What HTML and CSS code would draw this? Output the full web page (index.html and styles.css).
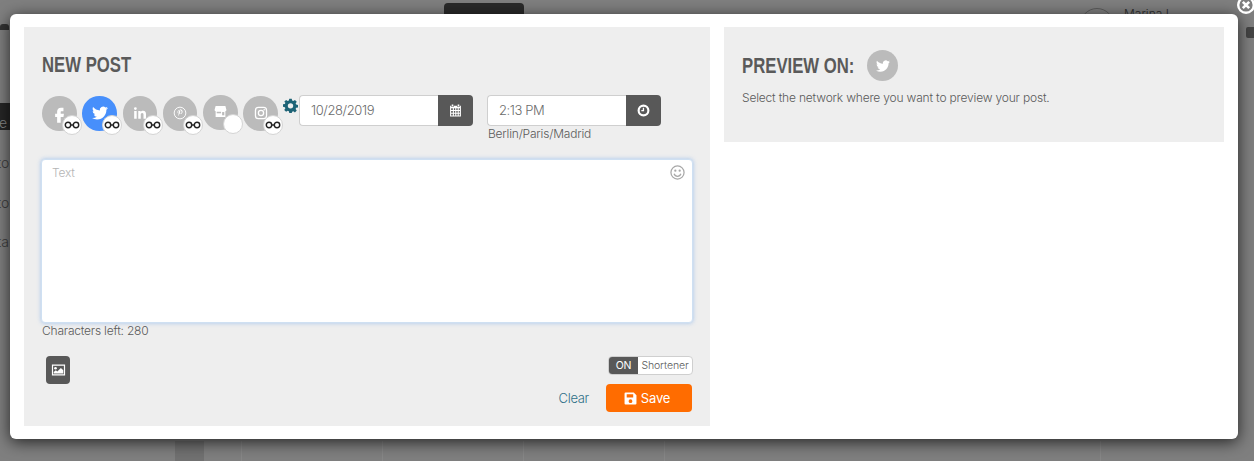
FILE: index.html
```html
<!DOCTYPE html>
<html lang="en">
<head>
<meta charset="utf-8">
<title>New post</title>
<link rel="stylesheet" href="styles.css">
</head>
<body>
<svg class="defs" width="0" height="0" aria-hidden="true">
  <symbol id="tw" viewBox="0 0 24 24"><path d="M23.953 4.57a10 10 0 01-2.825.775 4.958 4.958 0 002.163-2.723c-.951.555-2.005.959-3.127 1.184a4.92 4.92 0 00-8.384 4.482C7.69 8.095 4.067 6.13 1.64 3.162a4.822 4.822 0 00-.666 2.475c0 1.71.87 3.213 2.188 4.096a4.904 4.904 0 01-2.228-.616v.06a4.923 4.923 0 003.946 4.827 4.996 4.996 0 01-2.212.085 4.936 4.936 0 004.604 3.417 9.867 9.867 0 01-6.102 2.105c-.39 0-.779-.023-1.17-.067a13.995 13.995 0 007.557 2.209c9.053 0 13.998-7.496 13.998-13.985 0-.21 0-.42-.015-.63A9.935 9.935 0 0024 4.59z"/></symbol>
  <symbol id="link" viewBox="0 0 20 10"><g fill="none" stroke="#222" stroke-width="1.800"><circle cx="5" cy="5" r="3.400"/><circle cx="15" cy="5" r="3.400"/><path d="M8 5h4"/></g></symbol>
</svg>

<div class="backdrop-bits" aria-hidden="true">
  <span class="bit-logo"></span>
  <span class="bit-store"></span>
  <span class="bit-tab"></span>
  <span class="bit-menu">e</span>
  <span class="bit-line bit-l1">to</span>
  <span class="bit-line bit-l2">to</span>
  <span class="bit-line bit-l3">ta</span>
  <span class="bit-avatar"></span>
  <span class="bit-name">Marina L</span>
  <span class="bit-cell"></span>
  <span class="bit-rule r1"></span><span class="bit-rule r2"></span><span class="bit-rule r3"></span><span class="bit-rule r4"></span><span class="bit-rule r5"></span>
</div>

<main class="modal">
  <section class="panel panel-new">
    <h2 class="title">NEW POST</h2>
    <div class="controls">
      <div class="networks">
        <div class="net"><svg class="glyph glyph-f" viewBox="0 0 24 24"><path d="M14 8h3V3.500h-3.200C11 3.500 9 5.500 9 8.300V11H6.500v4H9v7.500h4.500V15H17l.6-4h-4.100V8.800c0-.5.200-.8.500-.8z"/></svg><span class="badge"><svg class="chain"><use href="#link"/></svg></span></div>
        <div class="net net-on"><svg class="glyph glyph-tw"><use href="#tw"/></svg><span class="badge"><svg class="chain"><use href="#link"/></svg></span></div>
        <div class="net"><svg class="glyph" viewBox="0 0 24 24"><path d="M2 8.500h4.300V22H2zM4.100 2a2.400 2.400 0 110 4.800 2.400 2.400 0 010-4.800zM9 8.500h4.100v1.900c.8-1.300 2.300-2.200 4.200-2.200 3.700 0 5 2.300 5 6V22H18v-7c0-1.800-.5-3.100-2.200-3.100-1.900 0-2.500 1.400-2.500 3.100v7H9z"/></svg><span class="badge"><svg class="chain"><use href="#link"/></svg></span></div>
        <div class="net"><svg class="glyph" viewBox="0 0 24 24"><circle cx="12" cy="12" r="10" fill="none" stroke="#fff" stroke-width="1.600"/><path d="M12.300 6.500c-3 0-4.600 1.900-4.600 3.900 0 1.100.5 2.100 1.400 2.500l.4-1.100c-.5-.5-.7-1-.7-1.600 0-1.500 1.200-2.800 3.200-2.800 1.700 0 2.800 1.100 2.800 2.600 0 1.900-.9 3.400-2.100 3.400-.7 0-1.200-.6-1-1.300l.7-2.600c.2-.8-.2-1.400-.9-1.400-.9 0-1.500.9-1.500 2 0 .6.200 1.100.2 1.100l-1.300 5.200h1.200l.9-3.400c.4.600 1.100.9 1.800.9 2.200 0 3.700-2 3.700-4.500 0-2.200-1.800-3.900-4.200-3.900z"/></svg><span class="badge"><svg class="chain"><use href="#link"/></svg></span></div>
        <div class="net net-up"><svg class="glyph glyph-store" viewBox="0 0 24 24"><path d="M3 2h18l2 7a2.600 2.600 0 01-2 2.400V22H3V11.400A2.600 2.600 0 011 9z"/><rect x="5" y="12.500" width="8" height="2.800" fill="#bbb"/><rect x="15" y="13" width="4" height="6" fill="#bbb"/></svg><span class="badge"></span></div>
        <div class="net"><svg class="glyph" viewBox="0 0 24 24"><rect x="2.500" y="2.500" width="19" height="19" rx="5" fill="none" stroke="#fff" stroke-width="2.200"/><circle cx="12" cy="12" r="4.500" fill="none" stroke="#fff" stroke-width="2.200"/><circle cx="17.500" cy="6.500" r="1.300"/></svg><span class="badge"><svg class="chain"><use href="#link"/></svg></span></div>
      </div>
      <svg class="gear" viewBox="0 0 24 24"><path fill-rule="evenodd" d="M10 1h4l.6 3.100 1.900.8L19.100 3 22 6l-1.800 2.600.8 1.900 3 .5v4l-3 .6-.8 1.900 1.800 2.600-2.900 2.900-2.600-1.800-1.900.8L14 24h-4l-.6-3-1.900-.8L4.900 22 2 19.100l1.800-2.600-.8-1.900-3-.6v-4l3-.5.8-1.900L2 6l2.900-3 2.600 1.900 1.900-.8zM12 8.200a4.300 4.300 0 100 8.600 4.300 4.300 0 000-8.600z"/></svg>
      <div class="field field-date">
        <div class="group">
          <span class="input">10/28/2019</span>
          <span class="addon">
            <svg class="addon-icon" viewBox="0 0 24 24"><path fill-rule="evenodd" d="M5 1h3v3H5zM16 1h3v3h-3zM2 3h2v2h5V3h6v2h5V3h2v20H2zM4 8v3h3V8zm5 0v3h2.500V8zm4.500 0v3H16V8zM18 8v3h2V8zM4 13v3h3v-3zm5 0v3h2.500v-3zm4.500 0v3H16v-3zm4.500 0v3h2v-3zM4 18v3h3v-3zm5 0v3h2.500v-3zm4.500 0v3H16v-3zm4.500 0v3h2v-3z"/></svg>
          </span>
        </div>
      </div>
      <div class="field field-time">
        <div class="group">
          <span class="input">2:13 PM</span>
          <span class="addon">
            <svg class="addon-icon" viewBox="0 0 24 24"><path fill-rule="evenodd" d="M12 1a11 11 0 110 22 11 11 0 010-22zm0 4a7 7 0 100 14 7 7 0 000-14zm-1.300 2h2.400v6.300H8v-2.400h2.700z"/></svg>
          </span>
        </div>
        <p class="zone">Berlin/Paris/Madrid</p>
      </div>
    </div>

    <div class="textbox">
      <span class="placeholder">Text</span>
      <svg class="smile" viewBox="0 0 24 24"><g fill="none" stroke="#a8a8a8" stroke-width="2"><circle cx="12" cy="12" r="10.500"/><path d="M6.500 14c1 2.800 3 4 5.500 4s4.500-1.200 5.500-4"/></g><circle cx="8.500" cy="9" r="1.800" fill="#a8a8a8"/><circle cx="15.500" cy="9" r="1.800" fill="#a8a8a8"/></svg>
    </div>
    <p class="counter">Characters left: 280</p>

    <div class="foot">
      <span class="media-btn"><svg class="media-icon" viewBox="0 0 24 20"><path fill-rule="evenodd" d="M1 1h22v18H1zm2 2v14h18V3z" fill="#fff"/><circle cx="7" cy="7" r="2.200" fill="#fff"/><path d="M4 16v-2.500l3.500-3 2.500 2 6-6 4 4V16z" fill="#fff"/></svg></span>
      <div class="actions">
        <div class="toggle"><span class="toggle-on">ON</span><span class="toggle-label">Shortener</span></div>
        <div class="buttons">
          <span class="clear">Clear</span>
          <span class="save"><svg class="save-icon" viewBox="0 0 24 24"><path fill-rule="evenodd" d="M3 1h15l5 5v15a2 2 0 01-2 2H3a2 2 0 01-2-2V3a2 2 0 012-2zm2 3v6h12V4zm7 9.500a3.500 3.500 0 100 7 3.500 3.500 0 000-7z"/></svg>Save</span>
        </div>
      </div>
    </div>
  </section>

  <section class="panel panel-preview">
    <div class="preview-head">
      <h2 class="title title-preview">PREVIEW ON:</h2>
      <span class="preview-net"><svg class="glyph"><use href="#tw"/></svg></span>
    </div>
    <p class="preview-text">Select the network where you want to preview your post.</p>
  </section>
</main>

<svg class="close" viewBox="0 0 20 20" aria-hidden="true"><circle cx="10" cy="10" r="7.800" fill="none" stroke="#fff" stroke-width="2.400"/><path d="M6.800 6.800l6.400 6.400M13.200 6.800l-6.400 6.400" stroke="#fff" stroke-width="2.600"/></svg>
</body>
</html>
```
FILE: styles.css
```css
* { box-sizing: border-box; }

html, body { height: 100%; }

body {
  margin: 0;
  height: 461px;
  overflow: hidden;
  position: relative;
  background: #7f7f7f;
  font-family: "Inter", "Liberation Sans", sans-serif;
  font-weight: 300;
  color: #5a5a5a;
}

.defs { position: absolute; }

/* dimmed page behind the dialog */
.backdrop-bits span { position: absolute; display: block; }
.bit-logo { left: 0; top: 24px; width: 9px; height: 6px; background: #333; border-radius: 3px 3px 0 0; }
.bit-store { left: 1246px; top: 27px; width: 8px; height: 11px; background: #444; border-radius: 2px 0 0 2px; }
.bit-tab { left: 444px; top: 3px; width: 80px; height: 12px; background: #2a2a2a; border-radius: 4px 4px 0 0; }
.bit-menu { left: 0; top: 103px; width: 10px; height: 27px; background: #262626; color: #8a8a8a; font-size: 14px; line-height: 39px; text-indent: -1px; overflow: hidden; }
.bit-line { left: 0; width: 10px; color: #3d3d3d; font-size: 14px; line-height: 16px; overflow: hidden; white-space: nowrap; text-indent: -3px; }
.bit-l1 { top: 155px; }
.bit-l2 { top: 195px; }
.bit-l3 { top: 234px; }
.bit-avatar { left: 1080px; top: 8px; width: 34px; height: 34px; border: 1px solid #5c5c5c; border-radius: 50%; }
.bit-name { left: 1124px; top: 6px; height: 8px; overflow: hidden; color: #2c2c2c; font-size: 12px; line-height: 16px; white-space: nowrap; }
.bit-cell { left: 175px; top: 441px; width: 29px; height: 20px; background: #717171; }
.bit-rule { top: 441px; width: 1px; height: 20px; background: #878787; }
.r1 { left: 241px; }
.r2 { left: 382px; }
.r3 { left: 523px; }
.r4 { left: 664px; }
.r5 { left: 1100px; }

/* dialog */
.modal {
  position: relative;
  margin: 0;
  top: 14px;
  left: 10px;
  display: flex;
  align-items: flex-start;
  gap: 14px;
  width: 1228px;
  height: 425px;
  padding: 13px 14px;
  background: #fff;
  border-radius: 6px;
  box-shadow: 0 3px 16px rgba(0, 0, 0, .72);
}

.panel { background: #eeeeee; }

.panel-new {
  width: 686px;
  height: 399px;
  padding: 27px 18px 0;
}

.panel-preview {
  width: 500px;
  height: 115px;
  padding: 23px 18px 0;
}

.title {
  margin: 0;
  font-family: "Liberation Sans", sans-serif;
  font-size: 22px;
  line-height: 22px;
  font-weight: 700;
  color: #5a5a5a;
  white-space: nowrap;
  transform: scaleX(.76);
  transform-origin: left center;
}

.title-preview { width: 113px; }

.controls {
  display: flex;
  align-items: flex-start;
  margin-top: 19px;
  height: 46px;
}

.networks { display: flex; gap: 5.800px; width: 235px; padding-top: 1px; }

.net {
  position: relative;
  flex: none;
  width: 34.500px;
  height: 34.500px;
  border-radius: 50%;
  background: #bbbbbb;
  display: flex;
  align-items: center;
  justify-content: center;
}

.net-on { background: #478ffb; }
.net-up { margin-top: -1px; }

.glyph { width: 14px; height: 14px; fill: #fff; }
.glyph-f { width: 19px; height: 19px; margin-top: 2px; }
.glyph-tw { width: 16px; height: 16px; }
.glyph-store { width: 13px; height: 13px; margin-top: -2px; }

.badge {
  position: absolute;
  left: 20px;
  top: 19px;
  width: 20px;
  height: 20px;
  border-radius: 50%;
  background: #fff;
  border: 1px solid #d4d4d4;
  display: flex;
  align-items: center;
  justify-content: center;
}

.chain { width: 16px; height: 8px; }

.gear { flex: none; width: 15px; height: 15px; margin: 3px 0 0 6px; fill: #1d6376; }

.field-date { margin-left: 1px; width: 174px; }
.field-time { margin-left: 14px; width: 174px; }

.group { display: flex; height: 31px; }

.input {
  flex: 1;
  height: 31px;
  padding-left: 11px;
  background: #fff;
  border: 1px solid #cfcfcf;
  border-right: 0;
  border-radius: 4px 0 0 4px;
  font-size: 13px;
  letter-spacing: -.4px;
  line-height: 29px;
  color: #6b6b6b;
}

.addon {
  flex: none;
  width: 35px;
  height: 31px;
  background: #585858;
  border-radius: 0 4px 4px 0;
  display: flex;
  align-items: center;
  justify-content: center;
}

.addon-icon { width: 13px; height: 13px; fill: #fff; }

.zone {
  margin: 0 0 0 1px;
  font-size: 12px;
  letter-spacing: -.2px;
  line-height: 15px;
  color: #5a5a5a;
}

.textbox {
  position: relative;
  margin: 18px 0 0 -1px;
  height: 164px;
  width: 652px;
  background: #fff;
  border: 1px solid #cfe0f2;
  border-radius: 4px;
  box-shadow: 0 0 4px rgba(102, 160, 233, .55);
  padding: 6px 10px;
}

.placeholder { font-size: 12px; letter-spacing: -.2px; line-height: 14px; color: #b5b5b5; display: block; }

.smile { position: absolute; right: 7px; top: 5px; width: 15px; height: 15px; }

.counter {
  margin: 0;
  font-size: 12px;
  letter-spacing: -.2px;
  line-height: 15px;
  color: #5a5a5a;
}

.foot {
  display: flex;
  justify-content: space-between;
  align-items: flex-start;
  margin-top: 18px;
  width: 651px;
}

.media-btn {
  margin-left: 4px;
  width: 24px;
  height: 28px;
  background: #585858;
  border-radius: 4px;
  display: flex;
  align-items: center;
  justify-content: center;
}

.media-icon { width: 15px; height: 12px; }

.actions { display: flex; flex-direction: column; align-items: flex-end; }

.toggle {
  display: flex;
  width: 85px;
  height: 19px;
  background: #fff;
  border: 1px solid #cfcfcf;
  border-radius: 4px;
  overflow: hidden;
  font-size: 10.500px;
  letter-spacing: -.1px;
  line-height: 17px;
}

.toggle-on { width: 29px; background: #585858; color: #fff; text-align: center; font-weight: 400; }
.toggle-label { flex: 1; text-align: center; color: #5a5a5a; }

.buttons {
  display: flex;
  align-items: center;
  gap: 17px;
  margin: 9px 1px 0 0;
}

.clear { font-size: 13px; letter-spacing: -.3px; color: #2f7088; }

.save {
  width: 86px;
  height: 28px;
  padding-right: 4px;
  background: #ff6c00;
  border-radius: 4px;
  color: #fff;
  font-size: 13px;
  font-weight: 400;
  letter-spacing: -.1px;
  display: flex;
  align-items: center;
  justify-content: center;
  gap: 4px;
}

.save-icon { width: 13px; height: 13px; fill: #fff; }

.preview-head { display: flex; align-items: center; gap: 12px; }

.preview-net {
  width: 31px;
  height: 31px;
  border-radius: 50%;
  background: #bbbbbb;
  display: flex;
  align-items: center;
  justify-content: center;
}

.preview-text {
  margin: 9px 0 0;
  font-size: 12px;
  letter-spacing: -.18px;
  line-height: 16px;
  color: #5a5a5a;
}

.close { position: absolute; left: 1236px; top: -5px; width: 20px; height: 20px; }
```
